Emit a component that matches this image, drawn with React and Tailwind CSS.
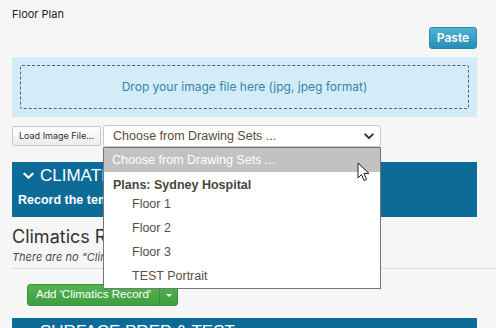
import React from "react";

const floors = ["Floor 1", "Floor 2", "Floor 3", "TEST Portrait"];

function ChevronDown({ className }) {
    return (
        <svg viewBox="0 0 12 8" className={className} fill="none" stroke="currentColor" strokeWidth="2.4" strokeLinecap="round" strokeLinejoin="round">
            <path d="M1.5 1.5 L6 6 L10.5 1.5" />
        </svg>
    );
}

function SectionHeader({ title, children }) {
    return (
        <div className="w-full bg-[#0d6b98] px-[6px] text-white font-['Liberation_Sans',Arial,sans-serif]">
            <div className="flex h-[24px] items-end gap-[6px] pl-[5px]">
                <ChevronDown className="mb-[6px] h-[8px] w-[11px]" />
                <span className="text-[17px] leading-[20px]">{title}</span>
            </div>
            {children}
        </div>
    );
}

export default function App() {
    return (
        <div className="relative h-[328px] w-[496px] overflow-hidden bg-[#f6f6f6] font-['Inter',sans-serif] text-[#333]">
            <div className="ml-3 w-[465px]">
                <div className="pt-[8px] text-[11px] leading-[13px] text-[#222]">Floor Plan</div>

                <div className="mt-[6px] flex justify-end">
                    <button className="h-[22px] w-[48px] rounded-[3px] border border-[#2c88ac] bg-gradient-to-b from-[#4db4d4] to-[#2a8db4] text-[12px] font-semibold text-white">
                        Paste
                    </button>
                </div>

                <div className="mt-[8px] h-[60px] bg-[#d4ecf7] p-[8px]">
                    <div className="flex h-full items-center justify-center rounded-[2px] border border-dashed border-[#2f6f8e] text-[12px] text-[#2f86b0]">
                        Drop your image file here (jpg, jpeg format)
                    </div>
                </div>

                <div className="relative mt-[8px] flex items-center gap-[2px]">
                    <button className="h-[20px] w-[89px] rounded-[2px] border border-[#c8c8c8] bg-gradient-to-b from-white to-[#ececec] text-[9px] text-[#333]">
                        Load Image File...
                    </button>
                    <div className="flex h-[22px] w-[278px] items-center justify-between rounded-[3px] border border-[#c9c9c9] bg-white pl-[9px] pr-[6px] font-['Liberation_Sans',Arial,sans-serif] text-[12.5px] text-[#5a4a3a]">
                        <span>Choose from Drawing Sets ...</span>
                        <ChevronDown className="h-[7px] w-[10px] text-[#333]" />
                    </div>

                    <div className="absolute left-[91px] top-[22px] z-10 w-[278px] border border-[#767676] bg-white font-['Liberation_Sans',Arial,sans-serif] text-[12.5px]">
                        <div className="flex h-[24px] items-center bg-[#c2c2c2] pl-[8px] text-white">Choose from Drawing Sets ...</div>
                        <div className="flex h-[20px] items-end pl-[9px] font-bold leading-[14px] text-[#4a4440]">Plans: Sydney Hospital</div>
                        {floors.map((f) => (
                            <div key={f} className="flex h-[24px] items-center pl-[28px] text-[#5a4f46]">
                                {f}
                            </div>
                        ))}
                    </div>
                </div>

                <div className="mt-[15px]">
                    <SectionHeader title="CLIMATICS">
                        <div className="flex h-[31px] items-center pb-[2px] text-[12.5px] font-bold">
                            Record the temperature and humidity readings
                        </div>
                    </SectionHeader>
                </div>

                <div className="mt-[9px] text-[18px] leading-[22px] text-[#333]">Climatics Records</div>
                <div className="mt-[3px] text-[11px] italic leading-[13px] text-[#4a4a5a]">
                    There are no "Climatics Records" yet.
                </div>
            </div>

            <div className="ml-3 mt-[4px] border-t border-[#dedede]"></div>

            <div className="ml-[27px] mt-[15px] flex h-[22px] w-[151px] overflow-hidden rounded-[3px] border border-[#3a8f3a] bg-gradient-to-b from-[#52b452] to-[#3f9e3f] font-['Liberation_Sans',Arial,sans-serif] text-white">
                <div className="flex flex-1 items-center justify-center text-[11.5px]">Add 'Climatics Record'</div>
                <div className="flex w-[18px] items-center justify-center border-l border-[#3a8a3a]">
                    <div className="h-0 w-0 border-x-[3px] border-t-[3px] border-x-transparent border-t-white"></div>
                </div>
            </div>

            <div className="ml-3 mt-[12px] w-[465px]">
                <SectionHeader title="SURFACE PREP & TEST" />
            </div>

            <svg className="absolute left-[357px] top-[162px] z-20 h-[20px] w-[14px]" viewBox="0 0 14 20">
                <path d="M1 1 L1 16 L4.5 12.5 L7 18.5 L9.5 17.5 L7 11.5 L12 11.5 Z" fill="white" stroke="#222" strokeWidth="1" strokeLinejoin="round" />
            </svg>
        </div>
    );
}
